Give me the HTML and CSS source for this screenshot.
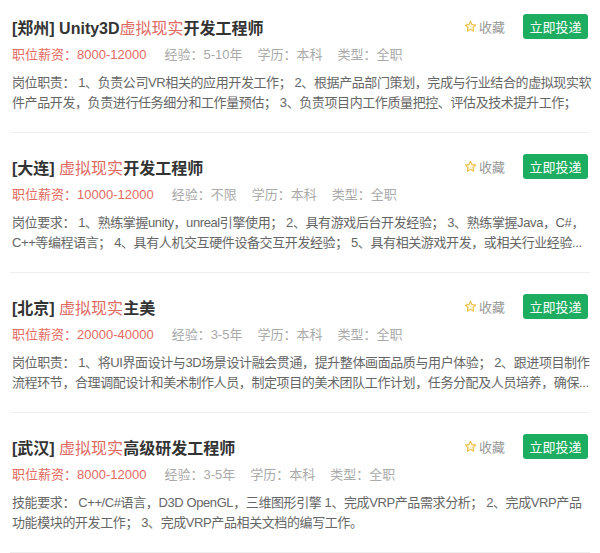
FILE: index.html
```html
<!DOCTYPE html>
<html lang="zh-CN">
<head>
<meta charset="utf-8">
<link rel="stylesheet" href="styles.css">
</head>
<body>
<div class="job-list">
  <div class="job">
    <div class="job-head">
      <h3 class="job-title">[郑州] Unity3D<span class="hl">虚拟现实</span>开发工程师</h3>
      <span class="collect"><svg class="star" viewBox="0 0 24 24"><path d="M12 2.5l2.9 6.1 6.6.8-4.9 4.6 1.3 6.6L12 17.3l-5.9 3.3 1.3-6.6-4.9-4.6 6.6-.8z"/></svg>收藏</span>
      <a class="apply">立即投递</a>
    </div>
    <div class="job-meta">
      <span class="salary">职位薪资：8000-12000</span>
      <span class="meta">经验：5-10年</span>
      <span class="meta">学历：本科</span>
      <span class="meta">类型：全职</span>
    </div>
    <p class="job-desc"><span class="line">岗位职责： 1、负责公司VR相关的应用开发工作； 2、根据产品部门策划，完成与行业结合的虚拟现实软</span><span class="line">件产品开发，负责进行任务细分和工作量预估； 3、负责项目内工作质量把控、评估及技术提升工作；</span></p>
  </div>
  <div class="job">
    <div class="job-head">
      <h3 class="job-title">[大连] <span class="hl">虚拟现实</span>开发工程师</h3>
      <span class="collect"><svg class="star" viewBox="0 0 24 24"><path d="M12 2.5l2.9 6.1 6.6.8-4.9 4.6 1.3 6.6L12 17.3l-5.9 3.3 1.3-6.6-4.9-4.6 6.6-.8z"/></svg>收藏</span>
      <a class="apply">立即投递</a>
    </div>
    <div class="job-meta">
      <span class="salary">职位薪资：10000-12000</span>
      <span class="meta">经验：不限</span>
      <span class="meta">学历：本科</span>
      <span class="meta">类型：全职</span>
    </div>
    <p class="job-desc"><span class="line">岗位要求： 1、熟练掌握unity，unreal引擎使用； 2、具有游戏后台开发经验； 3、熟练掌握Java，C#，</span><span class="line">C++等编程语言； 4、具有人机交互硬件设备交互开发经验； 5、具有相关游戏开发，或相关行业经验...</span></p>
  </div>
  <div class="job">
    <div class="job-head">
      <h3 class="job-title">[北京] <span class="hl">虚拟现实</span>主美</h3>
      <span class="collect"><svg class="star" viewBox="0 0 24 24"><path d="M12 2.5l2.9 6.1 6.6.8-4.9 4.6 1.3 6.6L12 17.3l-5.9 3.3 1.3-6.6-4.9-4.6 6.6-.8z"/></svg>收藏</span>
      <a class="apply">立即投递</a>
    </div>
    <div class="job-meta">
      <span class="salary">职位薪资：20000-40000</span>
      <span class="meta">经验：3-5年</span>
      <span class="meta">学历：本科</span>
      <span class="meta">类型：全职</span>
    </div>
    <p class="job-desc"><span class="line">岗位职责： 1、将UI界面设计与3D场景设计融会贯通，提升整体画面品质与用户体验； 2、跟进项目制作</span><span class="line">流程环节，合理调配设计和美术制作人员，制定项目的美术团队工作计划，任务分配及人员培养，确保...</span></p>
  </div>
  <div class="job">
    <div class="job-head">
      <h3 class="job-title">[武汉] <span class="hl">虚拟现实</span>高级研发工程师</h3>
      <span class="collect"><svg class="star" viewBox="0 0 24 24"><path d="M12 2.5l2.9 6.1 6.6.8-4.9 4.6 1.3 6.6L12 17.3l-5.9 3.3 1.3-6.6-4.9-4.6 6.6-.8z"/></svg>收藏</span>
      <a class="apply">立即投递</a>
    </div>
    <div class="job-meta">
      <span class="salary">职位薪资：8000-12000</span>
      <span class="meta">经验：3-5年</span>
      <span class="meta">学历：本科</span>
      <span class="meta">类型：全职</span>
    </div>
    <p class="job-desc"><span class="line">技能要求： C++/C#语言，D3D OpenGL，三维图形引擎 1、完成VRP产品需求分析； 2、完成VRP产品</span><span class="line">功能模块的开发工作； 3、完成VRP产品相关文档的编写工作。</span></p>
  </div>
</div>
</body>
</html>
```
FILE: styles.css
```css
* { box-sizing: border-box; }
html, body { margin: 0; padding: 0; background: #fff; }
body {
  font-family: "Liberation Sans", "Noto Sans CJK SC", sans-serif;
  font-size: 13px;
  color: #666;
  overflow: hidden;
}
.job-list {
  padding: 0 10px;
  margin-top: -7px;
}
.job {
  padding: 21px 2px 19px;
  border-bottom: 1px solid #eeeeee;
}
.job-head {
  display: flex;
  align-items: center;
  height: 25px;
}
.job-title {
  flex: 1;
  margin: 0;
  font-size: 16px;
  font-weight: bold;
  color: #333;
  white-space: nowrap;
}
.job-title .hl {
  color: #e06a64;
  font-weight: normal;
}
.collect {
  display: flex;
  align-items: center;
  color: #999;
  font-size: 13px;
  margin-right: 18px;
}
.star {
  width: 13px;
  height: 13px;
  margin-right: 2px;
  fill: #fff7dc;
  stroke: #f0bd45;
  stroke-width: 2;
  stroke-linejoin: round;
}
.apply {
  display: flex;
  align-items: center;
  justify-content: center;
  width: 65px;
  height: 25px;
  background: #1dad60;
  color: #fff;
  border-radius: 3px;
  font-size: 13px;
}
.job-meta {
  display: flex;
  margin-top: 6px;
  line-height: 20px;
  white-space: nowrap;
}
.salary {
  color: #e46a62;
  margin-right: 18px;
}
.meta {
  color: #aaa;
  margin-right: 15px;
}
.job-desc {
  margin: 8px 0 0;
  line-height: 20px;
  height: 40px;
  color: #666;
  letter-spacing: -0.4px;
}
.line {
  display: block;
  white-space: nowrap;
}
```
